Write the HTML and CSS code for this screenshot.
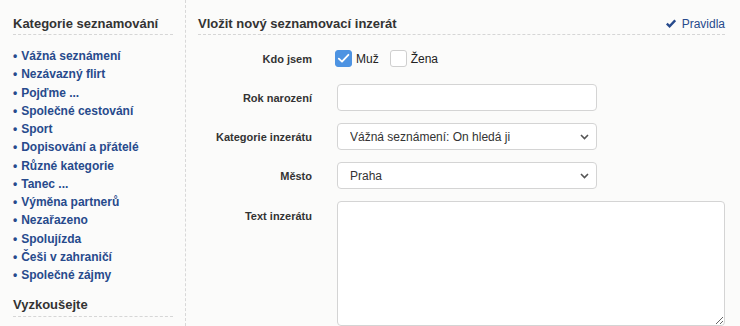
FILE: index.html
```html
<!DOCTYPE html>
<html lang="cs">
<head>
    <meta charset="UTF-8">
    <meta name="viewport" content="width=device-width, initial-scale=1.0">
    <title>Vložit nový seznamovací inzerát</title>
    <link rel="stylesheet" href="styles.css">
</head>
<body>
    <div class="page">
        <aside class="sidebar">
            <h2 class="box-title">Kategorie seznamování</h2>
            <ul class="cat-list">
                <li><a href="#">Vážná seznámení</a></li>
                <li><a href="#">Nezávazný flirt</a></li>
                <li><a href="#">Pojďme ...</a></li>
                <li><a href="#">Společné cestování</a></li>
                <li><a href="#">Sport</a></li>
                <li><a href="#">Dopisování a přátelé</a></li>
                <li><a href="#">Různé kategorie</a></li>
                <li><a href="#">Tanec ...</a></li>
                <li><a href="#">Výměna partnerů</a></li>
                <li><a href="#">Nezařazeno</a></li>
                <li><a href="#">Spolujízda</a></li>
                <li><a href="#">Češi v zahraničí</a></li>
                <li><a href="#">Společné zájmy</a></li>
            </ul>
            <h2 class="box-title second">Vyzkoušejte</h2>
        </aside>

        <main class="content">
            <div class="content-head">
                <h1>Vložit nový seznamovací inzerát</h1>
                <a class="rules" href="#">
                    <svg width="10" height="9" viewBox="0 0 10 9"><path d="M0.8 4.6 L3.6 7.3 L9.2 1.3" fill="none" stroke="#274a8c" stroke-width="2.4"/></svg>
                    Pravidla
                </a>
            </div>

            <form class="ad-form">
                <div class="row">
                    <span class="row-label">Kdo jsem</span>
                    <div class="choices">
                        <label class="choice">
                            <span class="box checked">
                                <svg width="13" height="11" viewBox="0 0 13 11"><path d="M1.8 5.6 L5 8.6 L11.4 1.8" fill="none" stroke="#fff" stroke-width="1.8" stroke-linecap="round" stroke-linejoin="round"/></svg>
                            </span>
                            Muž
                        </label>
                        <label class="choice">
                            <span class="box"></span>
                            Žena
                        </label>
                    </div>
                </div>

                <div class="row">
                    <label class="row-label" for="rok">Rok narození</label>
                    <input class="field" type="text" id="rok">
                </div>

                <div class="row">
                    <label class="row-label" for="kat">Kategorie inzerátu</label>
                    <div class="select-wrap">
                        <select class="field" id="kat">
                            <option>Vážná seznámení: On hledá ji</option>
                        </select>
                        <svg class="chevron" width="9" height="6" viewBox="0 0 9 6"><path d="M1 1 L4.5 4.5 L8 1" fill="none" stroke="#555" stroke-width="1.6"/></svg>
                    </div>
                </div>

                <div class="row">
                    <label class="row-label" for="mesto">Město</label>
                    <div class="select-wrap">
                        <select class="field" id="mesto">
                            <option>Praha</option>
                        </select>
                        <svg class="chevron" width="9" height="6" viewBox="0 0 9 6"><path d="M1 1 L4.5 4.5 L8 1" fill="none" stroke="#555" stroke-width="1.6"/></svg>
                    </div>
                </div>

                <div class="row top">
                    <label class="row-label" for="text">Text inzerátu</label>
                    <textarea class="area" id="text"></textarea>
                </div>
            </form>
        </main>
    </div>
</body>
</html>
```

FILE: styles.css
```css
body {
    font-family: "Liberation Sans", Arial, Helvetica, sans-serif;
    margin: 0;
    padding: 0;
    background-color: #fbfbfa;
    color: #333;
}
.page {
    display: flex;
    align-items: flex-start;
    height: 326px;
    overflow: hidden;
}
.sidebar {
    width: 186px;
    box-sizing: border-box;
    padding: 0 12px 0 13px;
    border-right: 1px dashed #d8d8d8;
    align-self: stretch;
}
.box-title {
    margin: 0;
    padding: 16px 0 2px;
    font-size: 13px;
    line-height: 16px;
    font-weight: bold;
    color: #333;
    border-bottom: 1px dashed #d6d6d6;
}
.box-title.second {
    margin-top: 13px;
    padding-top: 0;
    padding-bottom: 3px;
}
.cat-list {
    list-style: none;
    margin: 12px 0 0;
    padding: 0;
}
.cat-list li {
    font-size: 12px;
    line-height: 18.25px;
    font-weight: bold;
}
.cat-list li::before {
    content: "•";
    color: #274a8c;
    margin-right: 4px;
}
.cat-list a {
    color: #274a8c;
    text-decoration: none;
}
.content {
    flex: 1;
    padding: 0 15px 0 12px;
}
.content-head {
    display: flex;
    justify-content: space-between;
    align-items: baseline;
    padding: 16px 0 2px;
    border-bottom: 1px dashed #d6d6d6;
}
.content-head h1 {
    margin: 0;
    font-size: 13px;
    line-height: 16px;
    font-weight: bold;
    color: #333;
}
.rules {
    font-size: 12px;
    color: #274a8c;
    text-decoration: none;
}
.rules svg {
    margin-right: 2px;
}
.ad-form {
    margin-top: 10px;
}
.row {
    display: flex;
    align-items: center;
    min-height: 27px;
    margin-bottom: 12px;
}
.row.top {
    align-items: flex-start;
}
.row-label {
    width: 114px;
    margin-right: 25px;
    text-align: right;
    font-size: 11px;
    font-weight: bold;
    color: #333;
}
.row.top .row-label {
    padding-top: 9px;
}
.choices {
    display: flex;
    align-items: center;
    margin-left: -2px;
}
.choice {
    display: flex;
    align-items: center;
    font-size: 12px;
    color: #222;
    margin-right: 11px;
}
.box {
    width: 17px;
    height: 17px;
    box-sizing: border-box;
    border: 1px solid #cfcfcf;
    border-radius: 3px;
    background: #fff;
    margin-right: 4px;
    display: flex;
    align-items: center;
    justify-content: center;
}
.box.checked {
    background: #4d93e2;
    border-color: #4d93e2;
}
.field {
    width: 260px;
    height: 27px;
    box-sizing: border-box;
    border: 1px solid #d4d4d4;
    border-radius: 4px;
    background: #fff;
    font-family: inherit;
    font-size: 12px;
    color: #333;
    padding: 0 12px;
    margin: 0;
}
select.field {
    appearance: none;
    -webkit-appearance: none;
}
.select-wrap {
    position: relative;
    display: flex;
}
.chevron {
    position: absolute;
    right: 8px;
    top: 11px;
    pointer-events: none;
}
.area {
    width: 388px;
    height: 125px;
    box-sizing: border-box;
    border: 1px solid #d4d4d4;
    border-radius: 4px;
    background: #fff;
    margin: 0;
    font-family: inherit;
    font-size: 12px;
}
```
